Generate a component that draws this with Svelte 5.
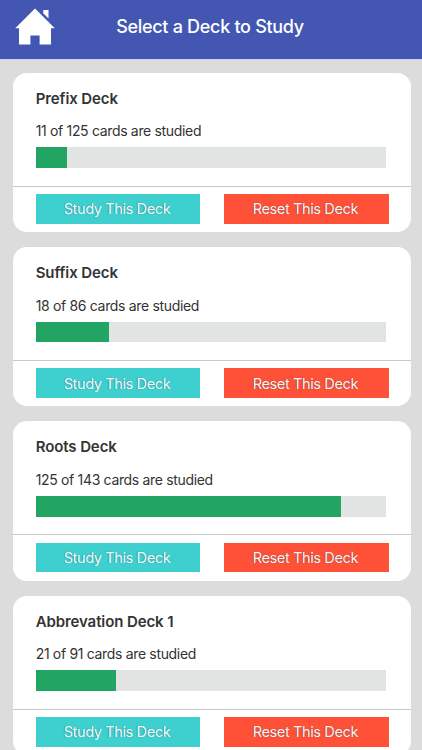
<script lang="ts">
  type Deck = {
    name: string;
    studied: number;
    total: number;
  };

  let decks = $state<Deck[]>([
    { name: "Prefix Deck", studied: 11, total: 125 },
    { name: "Suffix Deck", studied: 18, total: 86 },
    { name: "Roots Deck", studied: 125, total: 143 },
    { name: "Abbrevation Deck 1", studied: 21, total: 91 },
  ]);

  function pct(deck: Deck): string {
    return `${Math.round((deck.studied / deck.total) * 100)}%`;
  }

  function resetDeck(deck: Deck) {
    deck.studied = 0;
  }
</script>

<div class="screen">
  <header class="topbar">
    <button class="home" aria-label="Home">
      <svg width="40" height="37" viewBox="0 0 40 37" fill="#fff" aria-hidden="true">
        <path d="M20 .5 39.8 20.2H36V36.5H24.6V27.5H15.4V36.5H4V20.2H.2z" />
        <path d="M28.3 2H33.5V10.4L28.3 5.2z" />
      </svg>
    </button>
    <h1 class="heading">Select a Deck to Study</h1>
  </header>

  <main class="decks">
    {#each decks as deck (deck.name)}
      <section class="card">
        <div class="info">
          <h2 class="name">{deck.name}</h2>
          <p class="count">{deck.studied} of {deck.total} cards are studied</p>
          <div class="track">
            <div class="fill" style="width: {pct(deck)}"></div>
          </div>
        </div>
        <div class="actions">
          <button class="btn study">Study This Deck</button>
          <button class="btn reset" onclick={() => resetDeck(deck)}>Reset This Deck</button>
        </div>
      </section>
    {/each}
  </main>
</div>

<style>
  :global(body) {
    background: #dcdcdc;
  }

  .screen {
    height: 100vh;
    display: flex;
    flex-direction: column;
    overflow: hidden;
    background: #dcdcdc;
    color: #333;
    font-family: Inter, "Liberation Sans", sans-serif;
  }

  .topbar {
    box-sizing: border-box;
    flex: none;
    display: grid;
    grid-template-columns: 65px 1fr 65px;
    align-items: start;
    height: 60px;
    border-bottom: 1px solid #cfcfec;
    background: #4357b2;
  }

  .home {
    justify-self: start;
    display: flex;
    margin: 8px 0 0 15px;
    padding: 0;
    border: 0;
    background: none;
  }

  .heading {
    margin: 15px 0 0;
    padding-right: 2px;
    color: #fff;
    font-size: 18px;
    font-weight: 550;
    line-height: 24px;
    letter-spacing: -0.3px;
    text-align: center;
    white-space: nowrap;
  }

  .decks {
    display: flex;
    flex-direction: column;
    gap: 15px;
    padding: 12.7px 11px 0 13px;
  }

  .card {
    flex: none;
    box-sizing: border-box;
    height: 159.35px;
    border-radius: 14px;
    background: #fff;
    overflow: hidden;
  }

  .info {
    box-sizing: border-box;
    height: 114px;
    padding: 16px 24.7px 0 22.7px;
    border-bottom: 1px solid #c8c8c8;
  }

  .name {
    margin: 0;
    font-size: 15px;
    font-weight: 600;
    line-height: 20px;
    letter-spacing: -0.1px;
  }

  .count {
    margin: 12.5px 0 0;
    font-size: 14px;
    line-height: 20px;
    letter-spacing: -0.33px;
  }

  .track {
    height: 20.6px;
    margin-top: 6.2px;
    background: #e2e4e4;
  }

  .fill {
    height: 100%;
    background: #22a463;
  }

  .actions {
    display: flex;
    justify-content: space-between;
    padding: 7.4px 22.3px 0 22.7px;
  }

  .btn {
    width: 164.6px;
    height: 29.7px;
    padding: 0 2px 0 0;
    border: 0;
    color: #f4fafa;
    font: 400 14.5px/29px Inter, "Liberation Sans", sans-serif;
    letter-spacing: -0.37px;
    text-shadow: -0.5px -0.5px 1px rgba(0, 0, 0, 0.4);
  }

  .study {
    background: #3ecfcf;
  }

  .reset {
    background: #ff5038;
  }
</style>
